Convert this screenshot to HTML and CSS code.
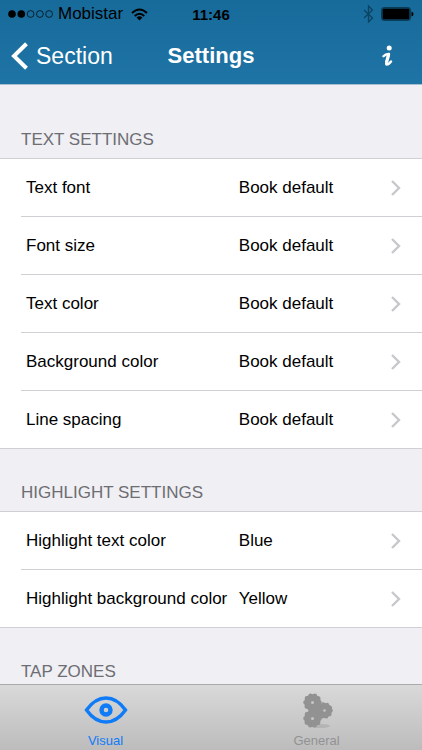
FILE: index.html
```html
<!DOCTYPE html>
<html lang="en">
<head>
<meta charset="utf-8">
<meta name="viewport" content="width=device-width, initial-scale=1">
<title>Settings</title>
<link rel="stylesheet" href="styles.css">
</head>
<body>
<svg class="defs" aria-hidden="true">
  <symbol id="chevron" viewBox="0 0 12 18"><path d="M2 2l7 7-7 7" fill="none" stroke="#c7c7cc" stroke-width="2.4"/></symbol>
  <symbol id="gear" viewBox="-10 -10 20 20">
    <circle r="8.800" fill="currentColor"/>
    <circle r="7.500" fill="none" stroke="currentColor" stroke-width="4.600" stroke-linecap="round" stroke-dasharray="0 4.712"/>
    <circle r="1.600" fill="#c6c6c6"/>
  </symbol>
</svg>
<div class="app">
  <header class="top">
    <div class="status">
      <div class="carrier">
        <svg width="45" height="10" viewBox="0 0 45 10" aria-hidden="true">
          <circle cx="4" cy="5" r="3.8"/><circle cx="13.3" cy="5" r="3.8"/>
          <g fill="none" stroke="#000" stroke-width=".7"><circle cx="22.6" cy="5" r="3.4"/><circle cx="31.9" cy="5" r="3.4"/><circle cx="41.1" cy="5" r="3.4"/></g>
        </svg>
        <span class="operator">Mobistar</span>
        <svg width="17" height="13" viewBox="0 0 17 13" aria-hidden="true">
          <g fill="none" stroke="#000" stroke-width="2"><path d="M1 5Q8.500-2 16 5"/><path d="M3.700 8Q8.500 3.500 13.300 8"/></g>
          <path d="M5.500 9.500Q8.500 7 11.500 9.500L8.500 12.500Z"/>
        </svg>
      </div>
      <time class="clock">11:46</time>
      <div class="power">
        <svg width="11" height="18" viewBox="0 0 11 18" aria-hidden="true"><path d="M1 5l8.500 8L5.500 17V1l4 4L1 13" fill="none" stroke="#0c4363" stroke-width="1.300"/></svg>
        <svg width="33" height="14" viewBox="0 0 33 14" aria-hidden="true"><rect x=".6" y=".6" width="28.800" height="12.800" rx="2" fill="none" stroke="#083750" stroke-width="1"/><rect x="1.500" y="1.500" width="27" height="11" rx="1"/><path d="M30.500 4.500Q32.500 5 32.500 7T30.500 9.500Z"/></svg>
      </div>
    </div>
    <nav class="navbar">
      <a class="back" href="#section">
        <svg width="18" height="28" viewBox="0 0 18 28" aria-hidden="true"><path d="M15.500 1.800L3 14l12.500 12.200" fill="none" stroke="#fff" stroke-width="4"/></svg>
        <span>Section</span>
      </a>
      <h1>Settings</h1>
      <button class="info" type="button" aria-label="Information">
        <svg width="12" height="22" viewBox="0 0 12 22" aria-hidden="true"><circle cx="7.200" cy="2.900" r="2.500" fill="#fff"/><path d="M1.500 11.200Q3.800 8.700 7 9L4.600 16.500Q3.400 20.500 5.800 19.300Q7.500 18.500 9 16.500" fill="none" stroke="#fff" stroke-width="2.400" stroke-linecap="round" stroke-linejoin="round"/><path d="M6.600 9.500L4.500 17.500" stroke="#fff" stroke-width="3.200"/></svg>
      </button>
    </nav>
  </header>
  <main class="settings">
    <section>
      <h2 class="first">TEXT SETTINGS</h2>
      <ul>
        <li><button class="row" type="button"><span class="label">Text font</span><span class="value">Book default</span><svg class="chevron"><use href="#chevron"/></svg></button></li>
        <li><button class="row" type="button"><span class="label">Font size</span><span class="value">Book default</span><svg class="chevron"><use href="#chevron"/></svg></button></li>
        <li><button class="row" type="button"><span class="label">Text color</span><span class="value">Book default</span><svg class="chevron"><use href="#chevron"/></svg></button></li>
        <li><button class="row" type="button"><span class="label">Background color</span><span class="value">Book default</span><svg class="chevron"><use href="#chevron"/></svg></button></li>
        <li><button class="row" type="button"><span class="label">Line spacing</span><span class="value">Book default</span><svg class="chevron"><use href="#chevron"/></svg></button></li>
      </ul>
    </section>
    <section>
      <h2>HIGHLIGHT SETTINGS</h2>
      <ul>
        <li><button class="row" type="button"><span class="label">Highlight text color</span><span class="value">Blue</span><svg class="chevron"><use href="#chevron"/></svg></button></li>
        <li><button class="row" type="button"><span class="label">Highlight background color</span><span class="value">Yellow</span><svg class="chevron"><use href="#chevron"/></svg></button></li>
      </ul>
    </section>
    <section>
      <h2>TAP ZONES</h2>
    </section>
  </main>
  <nav class="tabs">
    <button class="tab active" type="button">
      <svg width="44" height="36" viewBox="0 0 44 36" aria-hidden="true"><g fill="none" stroke="currentColor"><path d="M2.500 17Q11 5 22 5T41.500 17Q33 29 22 29T2.500 17Z" stroke-width="3.400"/><circle cx="22" cy="17" r="4.500" stroke-width="4.400"/></g></svg>
      <span>Visual</span>
    </button>
    <button class="tab" type="button">
      <svg width="44" height="36" viewBox="0 0 44 36" aria-hidden="true">
        <ellipse cx="25" cy="33" rx="10" ry="2" fill="#b4b4b4"/>
        <use href="#gear" x="21" y="9" width="17" height="17"/>
        <use href="#gear" x="8" y="0" width="19" height="19"/>
        <use href="#gear" x="8" y="16" width="19" height="19"/>
      </svg>
      <span>General</span>
    </button>
  </nav>
</div>
</body>
</html>
```
FILE: styles.css
```css
* {
  box-sizing: border-box;
}

body {
  margin: 0;
  background: #efeff4;
  color: #000;
  font-family: "Liberation Sans", Arial, sans-serif;
}

button {
  border: 0;
  padding: 0;
  background: none;
  color: inherit;
  font: inherit;
}

svg {
  display: block;
  flex: none;
}

.defs {
  position: absolute;
  width: 0;
  height: 0;
}

.app {
  display: flex;
  flex-direction: column;
  height: 100vh;
}

.top {
  flex: none;
  background: linear-gradient(#176b9b, #1e74a5);
  border-bottom: 1px solid #a9bfd0;
}

.status {
  display: grid;
  grid-template-columns: 1fr auto 1fr;
  align-items: center;
  height: 28px;
  padding: 0 8px;
}

.carrier,
.power {
  display: flex;
  align-items: center;
}

.carrier {
  gap: 5px;
}

.operator {
  padding-right: 3px;
  font-size: 17px;
}

.clock {
  font-size: 15px;
  font-weight: bold;
}

.power {
  justify-content: flex-end;
  gap: 7px;
}

.navbar {
  display: grid;
  grid-template-columns: 1fr auto 1fr;
  align-items: center;
  height: 56px;
  padding: 0 11px;
  color: #fff;
}

.back {
  display: flex;
  align-items: center;
  gap: 7px;
  color: inherit;
  font-size: 23px;
  text-decoration: none;
}

.navbar h1 {
  margin: 0;
  font-size: 22px;
}

.info {
  justify-self: end;
  padding-right: 17px;
}

.settings {
  flex: 1;
  min-height: 0;
  overflow-y: auto;
  scrollbar-width: none;
}

h2 {
  margin: 0;
  padding: 34px 21px 8px;
  color: #6d6d72;
  font-size: 17px;
  font-weight: normal;
  line-height: 20px;
}

h2.first {
  padding-top: 45px;
}

ul {
  margin: 0;
  padding: 0;
  list-style: none;
  background: #fff;
  border-top: 1px solid #d0d0d4;
  border-bottom: 1px solid #d0d0d4;
}

li {
  padding-left: 21px;
}

.row {
  display: grid;
  grid-template-columns: 55% 1fr auto;
  align-items: center;
  width: 100%;
  height: 57px;
  padding: 0 20px 0 5px;
  font-size: 17px;
  text-align: left;
  white-space: nowrap;
}

li + li .row {
  height: 58px;
  border-top: 1px solid #d0d0d4;
}

.row .value {
  padding-left: 6px;
}

.chevron {
  width: 12px;
  height: 18px;
}

.tabs {
  display: flex;
  flex: none;
  height: 66px;
  border-top: 1px solid #aaaaad;
  background: linear-gradient(#d9d9d9, #bcbcbc);
}

.tab {
  display: flex;
  flex: 1;
  flex-direction: column;
  align-items: center;
  gap: 4px;
  padding-top: 8px;
  color: #929292;
  font-size: 13px;
  line-height: 16px;
}

.tab.active {
  color: #0f7bf7;
}
```
